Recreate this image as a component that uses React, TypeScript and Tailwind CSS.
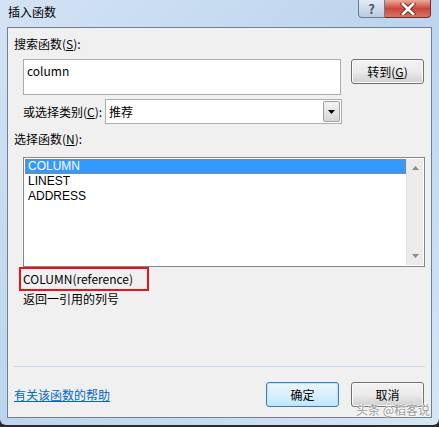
const functions = ["COLUMN", "LINEST", "ADDRESS"];

function Btn({ label, hotkey, focused }: { label: string; hotkey?: string; focused?: boolean }) {
  return (
    <button
      className={
        "w-[73px] h-[25px] rounded-[3px] border text-[12px] leading-[16px] text-black flex items-center justify-center " +
        (focused
          ? "border-[#3c7fb1] bg-gradient-to-b from-[#eaf6fd] via-[#d9f0fc] to-[#bee6fd] shadow-[inset_0_0_0_1px_#bde3f9]"
          : "border-[#707070] bg-gradient-to-b from-[#f2f2f2] via-[#ebebeb] to-[#cfcfcf] shadow-[inset_0_0_0_1px_#fcfcfc]")
      }
    >
      {label}
      {hotkey && (
        <span>
          (<span className="underline">{hotkey}</span>)
        </span>
      )}
    </button>
  );
}

export default function App() {
  return (
    <div className="w-[439px] h-[427px] bg-[#2b2b2b] font-['Noto_Sans_CJK_SC',sans-serif] text-[12px] leading-[16px] text-black">
      <div className="relative w-[439px] h-[425px] rounded-b-[6px] bg-gradient-to-br from-[#d3e3f4] via-[#bcd4ed] to-[#d6e6f5] flex flex-col px-[7px] pb-[7px]">
        {/* title bar */}
        <div className="h-[27px] flex items-start">
          <span className="mt-[4px] ml-[1px] text-black">插入函数</span>
          <div className="ml-auto mr-[1px] flex h-[18px]">
            <div className="w-[27px] h-[18px] rounded-bl-[4px] border border-t-0 border-[#6a7c94] bg-gradient-to-b from-[#e4ecf6] to-[#b9cbe0] flex items-center justify-center text-[13px] font-bold text-[#4a5a70] leading-none">
              ?
            </div>
            <div className="w-[46px] h-[18px] rounded-br-[4px] border border-t-0 border-l-0 border-[#7a2a20] bg-gradient-to-b from-[#e9a99c] via-[#c9473a] to-[#d37565] flex items-center justify-center">
              <svg width="16" height="12" viewBox="0 0 16 12">
                <path d="M3 1 L13 11 M13 1 L3 11" stroke="#5a1a12" strokeWidth="4.4" strokeLinecap="square" />
                <path d="M3 1 L13 11 M13 1 L3 11" stroke="#ffffff" strokeWidth="2.8" strokeLinecap="square" />
              </svg>
            </div>
          </div>
        </div>

        {/* client area */}
        <div className="flex-1 border border-[#6f7f94] bg-[#f0f0f0] flex flex-col">
          <div className="mt-[8px] pl-[6px]">
            搜索函数(<span className="underline">S</span>):
          </div>

          <div className="mt-[7px] pl-[15px] flex items-start gap-[10px]">
            <div className="w-[318px] h-[36px] border border-[#abadb3] bg-white px-[3px] pt-[3px]">column</div>
            <Btn label="转到" hotkey="G" />
          </div>

          <div className="mt-[4px] pl-[15px] flex items-center">
            <span className="w-[82px]">
              或选择类别(<span className="underline">C</span>):
            </span>
            <div className="w-[237px] h-[25px] border border-[#abadb3] bg-white flex items-center">
              <span className="pl-[3px] flex-1">推荐</span>
              <div className="w-[17px] h-[21px] mr-[1px] border border-[#a0a0a0] rounded-[2px] bg-gradient-to-b from-[#f4f4f4] to-[#d6d6d6] flex items-center justify-center">
                <svg width="7" height="4" viewBox="0 0 7 4">
                  <path d="M0 0 H7 L3.5 4 Z" fill="#000" />
                </svg>
              </div>
            </div>
          </div>

          <div className="mt-[7px] pl-[6px]">
            选择函数(<span className="underline">N</span>):
          </div>

          <div className="mt-[10px] ml-[15px] w-[402px] h-[110px] border border-[#828790] bg-white flex p-[1px]">
            <div className="flex-1 flex flex-col font-['Liberation_Sans',sans-serif]">
              {functions.map((f, i) => (
                <div
                  key={f}
                  className={
                    "h-[15px] pl-[3px] leading-[14px] text-[12px] " +
                    (i === 0 ? "bg-[#3399ff] text-white outline outline-1 outline-dotted outline-[#e07020] -outline-offset-1" : "")
                  }
                >
                  {f}
                </div>
              ))}
            </div>
            <div className="w-[17px] bg-[#ececec] border-l border-[#e2e2e2] flex flex-col items-center justify-between py-[7px]">
              <svg width="7" height="4" viewBox="0 0 7 4">
                <path d="M0 4 H7 L3.5 0 Z" fill="#8a8a8a" />
              </svg>
              <svg width="7" height="4" viewBox="0 0 7 4">
                <path d="M0 0 H7 L3.5 4 Z" fill="#8a8a8a" />
              </svg>
            </div>
          </div>

          <div className="ml-[11px] w-[130px] h-[24px] border-2 border-[#e8141b] pl-[2px] pt-[2px]">COLUMN(reference)</div>
          <div className="pl-[15px]">返回一引用的列号</div>

          <div className="flex-1" />
          <div className="mx-[6px] h-px bg-[#c6d6e6]" />

          <div className="mt-[15px] mb-[10px] pl-[6px] pr-[7px] flex items-center">
            <span className="text-[#0066cc] underline">有关该函数的帮助</span>
            <div className="ml-auto flex gap-[12px]">
              <Btn label="确定" focused />
              <Btn label="取消" />
            </div>
          </div>
        </div>

        <div className="absolute right-[9px] bottom-[8px] text-[12px] leading-[14px] text-[#9a9a9a] [text-shadow:0_0_2px_#fff,0_0_2px_#fff]">
          头条 @稻客说
        </div>
      </div>
    </div>
  );
}
